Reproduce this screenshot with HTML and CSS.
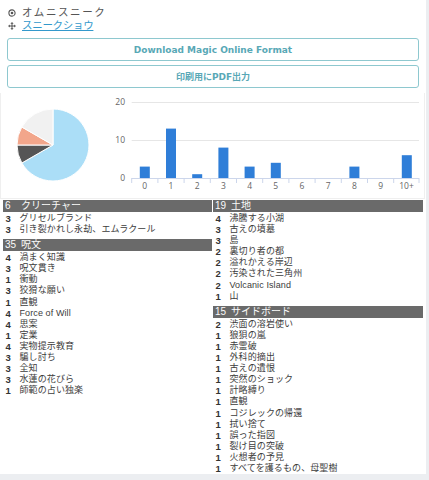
FILE: index.html
```html
<!DOCTYPE html>
<html lang="ja">
<head>
<meta charset="utf-8">
<link rel="stylesheet" href="styles.css">
</head>
<body>
<div class="panel">
  <div class="meta">
    <div class="meta-line">
      <svg class="ico" width="8" height="8" viewBox="0 0 8 8"><circle cx="4" cy="4" r="3.1" fill="none" stroke="#555" stroke-width="1.1"/><circle cx="4" cy="4" r="1.3" fill="#555"/></svg>
      <span class="deck">オムニスニーク</span>
    </div>
    <div class="meta-line">
      <svg class="ico" width="8" height="8" viewBox="0 0 8 8"><path d="M4 1v6M1 4h6" stroke="#555" stroke-width="1"/><path d="M4 0l1.6 1.8h-3.2zM4 8l1.6-1.8h-3.2zM0 4l1.8 1.6v-3.2zM8 4l-1.8 1.6v-3.2z" fill="#555"/></svg>
      <a class="link" href="#">スニークショウ</a>
    </div>
  </div>
  <div class="btn first">Download Magic Online Format</div>
  <div class="btn">印刷用にPDF出力</div>
  <div class="charts">
    <svg width="423" height="105" viewBox="0 0 423 105">
      <g stroke="#fff" stroke-width="1">
        <path d="M53 52 L53 16 A36 36 0 1 1 21.82 70 Z" fill="#abdef7"/>
        <path d="M53 52 L21.82 70 A36 36 0 0 1 17 52 Z" fill="#555555"/>
        <path d="M53 52 L17 52 A36 36 0 0 1 21.82 34 Z" fill="#f2a68b"/>
        <path d="M53 52 L21.82 34 A36 36 0 0 1 53 16 Z" fill="#f1f1f1"/>
      </g>
      <g stroke="#e6e6e6" stroke-width="1">
        <line x1="131.7" y1="9.5" x2="419" y2="9.5"/>
        <line x1="131.7" y1="47.5" x2="419" y2="47.5"/>
      </g>
      <g class="axis-text" text-anchor="end">
        <text x="125" y="12">20</text>
        <text x="125" y="50">10</text>
        <text x="125" y="88">0</text>
      </g>
      <g fill="#2f7ed8">
        <rect x="139.8" y="73.6" width="10" height="11.4"/>
        <rect x="166" y="35.6" width="10" height="49.4"/>
        <rect x="192.2" y="81.2" width="10" height="3.8"/>
        <rect x="218.4" y="54.6" width="10" height="30.4"/>
        <rect x="244.6" y="73.6" width="10" height="11.4"/>
        <rect x="270.8" y="69.8" width="10" height="15.2"/>
        <rect x="349.4" y="73.6" width="10" height="11.4"/>
        <rect x="401.8" y="62.2" width="10" height="22.8"/>
      </g>
      <line x1="131.7" y1="85.5" x2="419" y2="85.5" stroke="#ccd6eb" stroke-width="1"/>
      <g stroke="#ccd6eb" stroke-width="1">
        <line x1="131.7" y1="85" x2="131.7" y2="90"/>
        <line x1="157.9" y1="85" x2="157.9" y2="90"/>
        <line x1="184.1" y1="85" x2="184.1" y2="90"/>
        <line x1="210.3" y1="85" x2="210.3" y2="90"/>
        <line x1="236.5" y1="85" x2="236.5" y2="90"/>
        <line x1="262.7" y1="85" x2="262.7" y2="90"/>
        <line x1="288.9" y1="85" x2="288.9" y2="90"/>
        <line x1="315.1" y1="85" x2="315.1" y2="90"/>
        <line x1="341.3" y1="85" x2="341.3" y2="90"/>
        <line x1="367.5" y1="85" x2="367.5" y2="90"/>
        <line x1="393.7" y1="85" x2="393.7" y2="90"/>
        <line x1="419" y1="85" x2="419" y2="90"/>
      </g>
      <g class="axis-text" text-anchor="middle">
        <text x="144.8" y="96">0</text>
        <text x="171" y="96">1</text>
        <text x="197.2" y="96">2</text>
        <text x="223.4" y="96">3</text>
        <text x="249.6" y="96">4</text>
        <text x="275.8" y="96">5</text>
        <text x="302" y="96">6</text>
        <text x="328.2" y="96">7</text>
        <text x="354.4" y="96">8</text>
        <text x="380.6" y="96">9</text>
        <text x="406.5" y="96">10+</text>
      </g>
    </svg>
  </div>
  <div class="lists">
    <div class="col">
      <div class="head"><span class="hc">6</span>クリーチャー</div>
      <div class="row"><b>3</b><span>グリセルブランド</span></div>
      <div class="row"><b>3</b><span>引き裂かれし永劫、エムラクール</span></div>
      <div class="head"><span class="hc">35</span>呪文</div>
      <div class="row"><b>4</b><span>渦まく知識</span></div>
      <div class="row"><b>3</b><span>呪文貫き</span></div>
      <div class="row"><b>1</b><span>衝動</span></div>
      <div class="row"><b>3</b><span>狡猾な願い</span></div>
      <div class="row"><b>1</b><span>直観</span></div>
      <div class="row"><b>4</b><span>Force of Will</span></div>
      <div class="row"><b>4</b><span>思案</span></div>
      <div class="row"><b>1</b><span>定業</span></div>
      <div class="row"><b>4</b><span>実物提示教育</span></div>
      <div class="row"><b>3</b><span>騙し討ち</span></div>
      <div class="row"><b>3</b><span>全知</span></div>
      <div class="row"><b>3</b><span>水蓮の花びら</span></div>
      <div class="row"><b>1</b><span>師範の占い独楽</span></div>
    </div>
    <div class="col">
      <div class="head"><span class="hc">19</span>土地</div>
      <div class="row"><b>4</b><span>沸騰する小湖</span></div>
      <div class="row"><b>3</b><span>古えの墳墓</span></div>
      <div class="row"><b>3</b><span>島</span></div>
      <div class="row"><b>2</b><span>裏切り者の都</span></div>
      <div class="row"><b>2</b><span>溢れかえる岸辺</span></div>
      <div class="row"><b>2</b><span>汚染された三角州</span></div>
      <div class="row"><b>2</b><span>Volcanic Island</span></div>
      <div class="row"><b>1</b><span>山</span></div>
      <div class="head"><span class="hc">15</span>サイドボード</div>
      <div class="row"><b>2</b><span>渋面の溶岩使い</span></div>
      <div class="row"><b>1</b><span>狼狽の嵐</span></div>
      <div class="row"><b>1</b><span>赤霊破</span></div>
      <div class="row"><b>1</b><span>外科的摘出</span></div>
      <div class="row"><b>1</b><span>古えの遺恨</span></div>
      <div class="row"><b>1</b><span>突然のショック</span></div>
      <div class="row"><b>1</b><span>計略縛り</span></div>
      <div class="row"><b>1</b><span>直観</span></div>
      <div class="row"><b>1</b><span>コジレックの帰還</span></div>
      <div class="row"><b>1</b><span>拭い捨て</span></div>
      <div class="row"><b>1</b><span>誤った指図</span></div>
      <div class="row"><b>1</b><span>裂け目の突破</span></div>
      <div class="row"><b>1</b><span>火想者の予見</span></div>
      <div class="row"><b>1</b><span>すべてを護るもの、母聖樹</span></div>
    </div>
  </div>
</div>
</body>
</html>
```

FILE: styles.css
```css
html, body {
  margin: 0;
  padding: 0;
  background: #eceef1;
}
body {
  font-family: "Liberation Sans", "Noto Sans CJK JP", sans-serif;
  color: #444;
}
.panel {
  width: 426px;
  height: 474px;
  background: #fff;
  box-sizing: border-box;
  padding-top: 6px;
  overflow: hidden;
}
.meta {
  padding-left: 8px;
  font-size: 10.5px;
  color: #555;
}
.meta-line {
  display: flex;
  align-items: center;
  height: 13px;
  line-height: 13px;
}
.deck {
  letter-spacing: 1.6px;
}
.ico {
  flex: none;
  margin-right: 6px;
}
.link {
  color: #3399cc;
  text-decoration: underline;
  letter-spacing: -0.3px;
}
.btn {
  margin: 4px 0 0 7px;
  width: 412px;
  height: 23px;
  box-sizing: border-box;
  border: 1px solid #8ec8cf;
  border-radius: 3px;
  display: flex;
  align-items: center;
  justify-content: center;
  font-family: "DejaVu Sans", "Noto Sans CJK JP", sans-serif;
  font-weight: bold;
  font-size: 9px;
  color: #58a8b6;
}
.btn.first {
  margin-top: 6px;
}
.charts {
  margin-top: 5px;
  width: 425px;
  box-sizing: border-box;
  border: 1px solid #efefef;
  border-top: none;
  height: 106px;
}
.charts svg {
  display: block;
  margin-left: -1px;
}
.axis-text {
  font-family: "Open Sans", "Liberation Sans", sans-serif;
  font-size: 8.5px;
  fill: #666;
}
.lists {
  margin: 1px 3px 0 3px;
  display: grid;
  grid-template-columns: 209px 210px;
  column-gap: 1px;
}
.col {
  display: flex;
  flex-direction: column;
}
.head {
  height: 12px;
  line-height: 12px;
  background: #6a6a6a;
  color: #fafafa;
  font-size: 10px;
  padding-left: 2px;
  margin: 4px 0 1px;
  display: flex;
}
.head:first-child {
  margin-top: 0;
}
.hc {
  width: 16px;
  flex: none;
}
.row {
  height: 11.1px;
  line-height: 11.1px;
  font-size: 9px;
  letter-spacing: 0.1px;
  padding-left: 2.5px;
  display: flex;
  white-space: nowrap;
}
.row b {
  width: 14px;
  flex: none;
  color: #333;
  font-weight: bold;
  font-size: 9.5px;
}
.row span {
  color: #3c3c3c;
}
```
